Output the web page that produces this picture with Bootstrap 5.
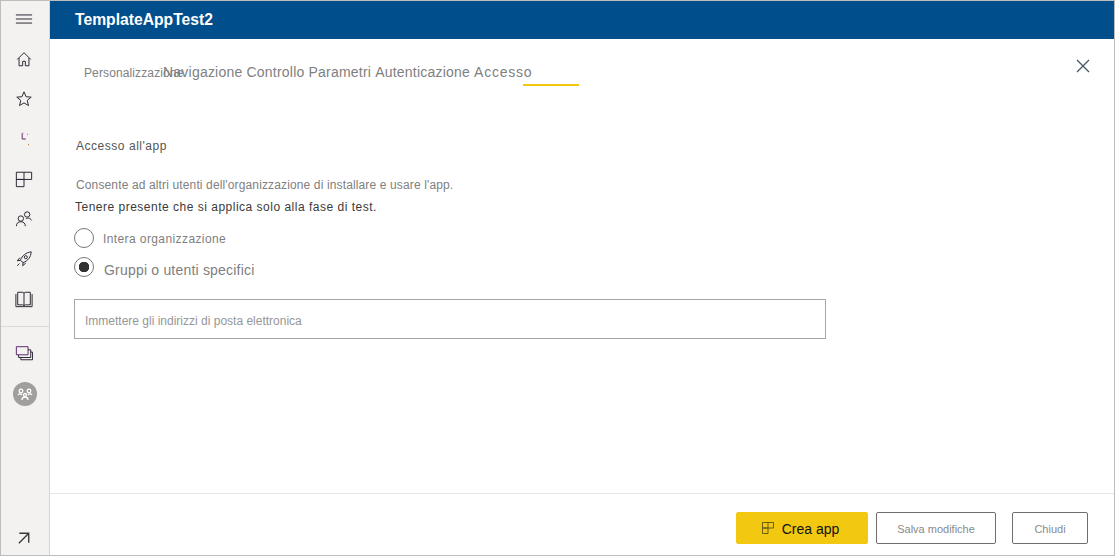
<!DOCTYPE html>
<html lang="it">
<head>
  <meta charset="utf-8">
  <link href="https://cdn.jsdelivr.net/npm/bootstrap@5.3.3/dist/css/bootstrap.min.css" rel="stylesheet">
  <title>TemplateAppTest2</title>
  <style>
    html, body { height: 100%; overflow: hidden; }
    body { font-family: "Liberation Sans", Arial, sans-serif; background: #fff; }

    /* outer window frame */
    .app-frame { height: 556px; border: 1px solid #bdbdbd; }

    /* left rail */
    .side-rail { width: 49px; background: #f3f2f1; border-right: 1px solid #d8d6d4; }
    .rail-item { height: 40px; padding-bottom: 4px; padding-right: 2px; }
    .rail-item svg { width: 18px; height: 18px; fill: none; stroke: #2f2633; stroke-width: 1.1; }
    .rail-line { border-top: 1px solid #dcdad8; margin-top: 5px; margin-bottom: 8px; }
    .rail-avatar { width: 24px; height: 24px; background: #a19f9d; margin-top: 2px; margin-left: 2px; }
    .rail-item .rail-avatar svg { width: 18px; height: 18px; stroke: #fff; stroke-width: 1.3; }
    .rail-bottom { height: 36px; padding-right: 2px; padding-top: 2px; }
    .rail-bottom svg { width: 12px; height: 12px; fill: none; stroke: #3a3a3a; stroke-width: 1.6; }

    /* header */
    .top-strip { height: 38px; background: #004e8c; color: #fff; padding-left: 25px; font-size: 15.7px; font-weight: 700; }

    /* tabs */
    .tab-strip { height: 61px; padding-left: 34px; padding-right: 24px; }
    .step-tab { font-size: 14px; color: #808080; margin-right: 4px; line-height: 20px; padding-top: 23px; white-space: nowrap; letter-spacing: .22px; }
    .step-tab.first-tab { font-size: 12px; width: 79px; margin-right: 0; padding-top: 24px; letter-spacing: .12px; }
    .step-tab.on-tab { position: relative; letter-spacing: .75px; }
    .step-tab.on-tab::after { content: ""; position: absolute; left: 49px; width: 56px; top: 45px; height: 2px; background: #f2c811; }
    .close-x { width: 14px; height: 14px; margin-top: 20px; stroke: #3f5364; stroke-width: 1.2; fill: none; }

    /* form body */
    .form-body { padding-left: 24px; }
    .sect-title { font-size: 12px; color: #555; margin: 38px 0 0 2px; line-height: 16px; letter-spacing: .53px; }
    .sect-note { font-size: 12px; color: #808080; margin: 23px 0 0 2px; line-height: 16px; letter-spacing: .135px; }
    .sect-warn { font-size: 12px; color: #3a3a3a; margin: 6px 0 0 1px; line-height: 16px; letter-spacing: .5px; }
    .pick-row { display: flex; align-items: center; }
    .pick-row input {
      appearance: none; width: 20px; height: 20px; margin: 0; border-radius: 50%;
      border: 1px solid #777; background: #fff;
    }
    .pick-row input:checked { background-image: radial-gradient(circle, #333 0 5px, transparent 5.5px); }
    .pick-one { margin-top: 13px; height: 20px; }
    .pick-one label { font-size: 12px; color: #808080; margin-left: 9px; padding-top: 2px; letter-spacing: .4px; }
    .pick-two { margin-top: 9px; height: 20px; }
    .pick-two label { font-size: 14px; color: #808080; margin-left: 10px; padding-top: 7px; letter-spacing: .2px; }
    .mail-box {
      width: 752px; height: 40px; margin-top: 22px; border: 1px solid #a6a6a6; border-radius: 0;
      font-size: 12px; padding: 3px 10px 0; color: #555;
    }
    .mail-box::placeholder { color: #969696; opacity: 1; }

    /* footer */
    .foot-bar { height: 62px; border-top: 1px solid #e6e6e6; padding: 18px 26px 0 0; gap: 8px; }
    .btn-crea, .btn-plain { height: 32px; border-radius: 2px; padding: 2px 0 0; }
    .btn-crea { width: 132px; background: #f2c811; border: 1px solid #f2c811; color: #111; font-size: 14px; padding-right: 3px; }
    .btn-crea svg { width: 12px; height: 12px; fill: none; stroke: #5e5316; stroke-width: 1; margin-right: 8px; margin-bottom: 2px; }
    .btn-plain { background: #fff; border: 1px solid #6e6e6e; color: #8a8a8a; font-size: 11px; }
    .btn-salva { width: 120px; }
    .btn-chiudi { width: 76px; margin-left: 8px; }
  </style>
</head>
<body>
  <div class="app-frame d-flex">

    <!-- Left rail -->
    <nav class="side-rail d-flex flex-column flex-shrink-0">
      <div class="rail-item d-flex align-items-center justify-content-center">
        <svg viewBox="0 0 20 20"><path d="M1 5.500h18M1 10h18M1 14.500h18"/></svg>
      </div>
      <div class="rail-item d-flex align-items-center justify-content-center">
        <svg viewBox="0 0 20 20"><path d="M2.500 10.500 10 3l7.500 7.500M4.500 9v8.500h4v-5h3v5h4V9"/></svg>
      </div>
      <div class="rail-item d-flex align-items-center justify-content-center">
        <svg viewBox="0 0 20 20"><path d="m10 2 2.300 5.500 5.700.4-4.400 3.700 1.400 5.700L10 14.300l-5 3 1.400-5.700L2 7.900l5.700-.4z"/></svg>
      </div>
      <div class="rail-item d-flex align-items-center justify-content-center">
        <svg viewBox="0 0 20 20"><path d="M8 3.500v6.500h4" stroke="#5b2a6e"/><path d="M8 3.500h2" stroke="#d9a0d0"/><path d="M14 4v1.500M15 15.500v1.500" stroke="#c08a3e"/></svg>
      </div>
      <div class="rail-item d-flex align-items-center justify-content-center">
        <svg viewBox="0 0 20 20"><path d="M1.500 2.500h17v8h-17zM1.500 10.500h8.500v8h-8.500zM10 2.500v8"/></svg>
      </div>
      <div class="rail-item d-flex align-items-center justify-content-center">
        <svg viewBox="0 0 20 20"><circle cx="6.500" cy="9.500" r="3"/><circle cx="13.500" cy="5" r="3"/><path d="M1.500 18c0-3 2-5 5-5s5 2 5 5M12 10c1-1.500 5-1.500 6.500 1.500"/></svg>
      </div>
      <div class="rail-item d-flex align-items-center justify-content-center">
        <svg viewBox="0 0 20 20"><path d="M6 11.500C8 6 12 3 18 2c-.5 6-3.500 10-9 12zM6 11.500l-3.500.5 3-3.500M9 14l-.5 3.500L12 14.500M5 15l-2.500 2.500"/><circle cx="12" cy="8" r="1.700"/></svg>
      </div>
      <div class="rail-item d-flex align-items-center justify-content-center">
        <svg viewBox="0 0 20 20"><path d="M3 2.500h5.500c.8 0 1.500.5 1.500 1.500 0-1 .7-1.500 1.500-1.500H17v14h-5.500c-.8 0-1.500.3-1.500 1 0-.7-.7-1-1.500-1H3zM10 4v13.500M1 4.500v14h18v-14"/></svg>
      </div>
      <div class="rail-line"></div>
      <div class="rail-item d-flex align-items-center justify-content-center">
        <svg viewBox="0 0 20 20"><path d="M1.500 3h13v9h-13z" stroke="#5b2a6e"/><path d="M4 12v3h13.500V6.500h-3M6.500 15v2.500h13V9h-2"/></svg>
      </div>
      <div class="rail-item d-flex align-items-center justify-content-center">
        <div class="rail-avatar rounded-circle d-flex align-items-center justify-content-center">
          <svg viewBox="0 0 18 18"><circle cx="5" cy="6" r="1.800"/><circle cx="13" cy="6" r="1.800"/><circle cx="9" cy="10" r="1.500"/><path d="M2 10c1-1.500 3-1.500 4 0M12 10c1-1.500 3-1.500 4 0M6 15c0-2 1-3 3-3s3 1 3 3"/></svg>
        </div>
      </div>
      <div class="rail-bottom d-flex align-items-center justify-content-center mt-auto">
        <svg viewBox="0 0 14 14"><path d="M1 13 12 2M1.500 1.500h11v11"/></svg>
      </div>
    </nav>

    <!-- Main panel -->
    <main class="flex-grow-1 d-flex flex-column">
      <header class="top-strip d-flex align-items-center">TemplateAppTest2</header>

      <div class="tab-strip d-flex align-items-start">
        <span class="step-tab first-tab">Personalizzazione</span>
        <span class="step-tab">Navigazione</span>
        <span class="step-tab">Controllo</span>
        <span class="step-tab">Parametri</span>
        <span class="step-tab">Autenticazione</span>
        <span class="step-tab on-tab">Accesso</span>
        <svg class="close-x ms-auto" viewBox="0 0 14 14"><path d="m1 1 12 12M13 1 1 13"/></svg>
      </div>

      <form class="form-body flex-grow-1">
        <h2 class="sect-title fw-normal">Accesso all'app</h2>
        <p class="sect-note">Consente ad altri utenti dell'organizzazione di installare e usare l'app.</p>
        <p class="sect-warn mb-0">Tenere presente che si applica solo alla fase di test.</p>
        <div class="pick-row pick-one">
          <input type="radio" name="accesso" id="pickAll">
          <label for="pickAll">Intera organizzazione</label>
        </div>
        <div class="pick-row pick-two">
          <input type="radio" name="accesso" id="pickSome" checked>
          <label for="pickSome">Gruppi o utenti specifici</label>
        </div>
        <input type="text" class="form-control mail-box" placeholder="Immettere gli indirizzi di posta elettronica">
      </form>

      <footer class="foot-bar d-flex justify-content-end align-items-start">
        <button type="button" class="btn btn-crea d-flex align-items-center justify-content-center">
          <svg viewBox="0 0 13 13"><path d="M.5.500h12v6h-12zM.5 6.500h6v6h-6zM6.500.500v6"/></svg>Crea app
        </button>
        <button type="button" class="btn btn-plain btn-salva">Salva modifiche</button>
        <button type="button" class="btn btn-plain btn-chiudi">Chiudi</button>
      </footer>
    </main>
  </div>

  <script src="https://cdn.jsdelivr.net/npm/bootstrap@5.3.3/dist/js/bootstrap.bundle.min.js"></script>
</body>
</html>
